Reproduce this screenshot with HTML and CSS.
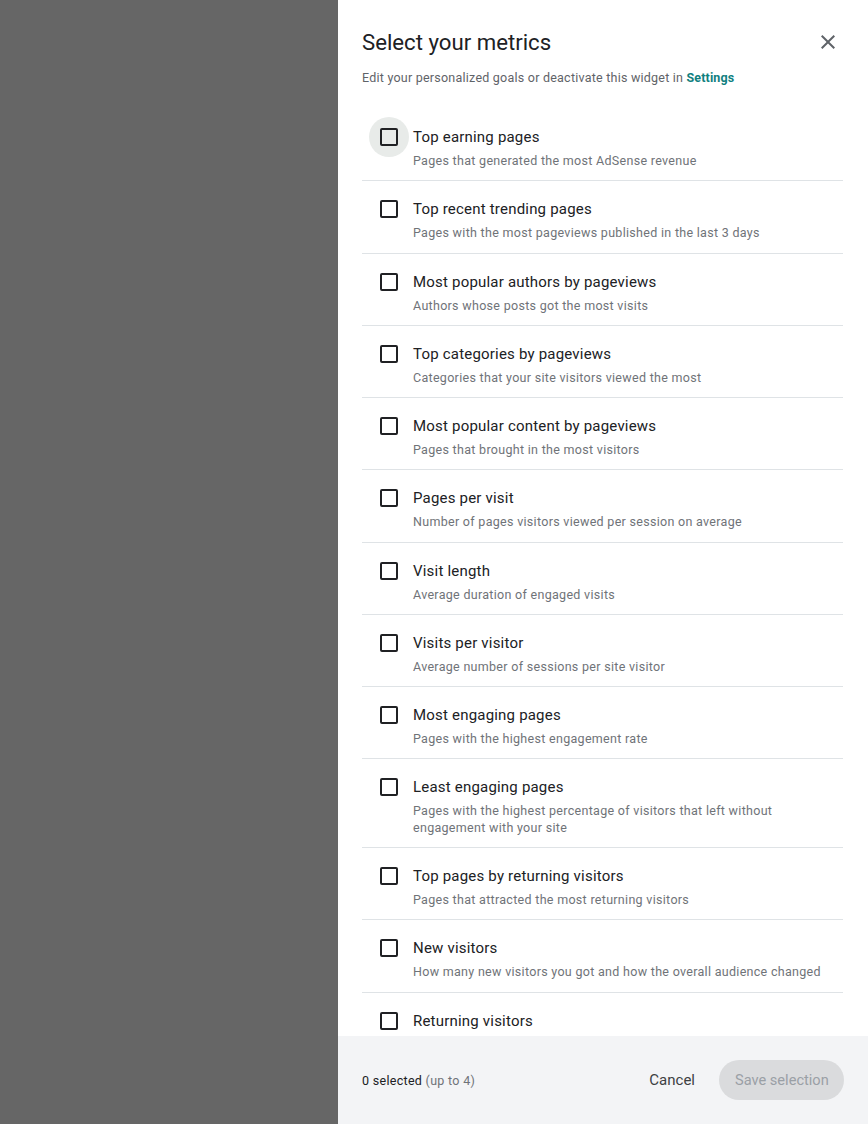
FILE: index.html
```html
<!DOCTYPE html>
<html>
<head>
<meta charset="utf-8">
<link rel="stylesheet" href="styles.css">
</head>
<body>
<div class="layout">
  <div class="overlay"></div>
  <aside class="panel">
    <div class="panel-scroll">
      <header class="head">
        <h1 class="title">Select your metrics</h1>
        <button class="close" aria-label="Close">
          <svg width="24" height="24" viewBox="0 0 24 24"><path d="M19 6.41 17.59 5 12 10.59 6.41 5 5 6.41 10.59 12 5 17.59 6.41 19 12 13.41 17.59 19 19 17.59 13.41 12z" fill="#5f6368"/></svg>
        </button>
      </header>
      <p class="sub">Edit your personalized goals or deactivate this widget in <a class="link">Settings</a></p>
      <ul class="list">
        <li class="item"><span class="cb hover"><span class="box"></span></span><div class="txt"><div class="name">Top earning pages</div><div class="desc">Pages that generated the most AdSense revenue</div></div></li>
        <li class="item"><span class="cb"><span class="box"></span></span><div class="txt"><div class="name">Top recent trending pages</div><div class="desc">Pages with the most pageviews published in the last 3 days</div></div></li>
        <li class="item"><span class="cb"><span class="box"></span></span><div class="txt"><div class="name">Most popular authors by pageviews</div><div class="desc">Authors whose posts got the most visits</div></div></li>
        <li class="item"><span class="cb"><span class="box"></span></span><div class="txt"><div class="name">Top categories by pageviews</div><div class="desc">Categories that your site visitors viewed the most</div></div></li>
        <li class="item"><span class="cb"><span class="box"></span></span><div class="txt"><div class="name">Most popular content by pageviews</div><div class="desc">Pages that brought in the most visitors</div></div></li>
        <li class="item"><span class="cb"><span class="box"></span></span><div class="txt"><div class="name">Pages per visit</div><div class="desc">Number of pages visitors viewed per session on average</div></div></li>
        <li class="item"><span class="cb"><span class="box"></span></span><div class="txt"><div class="name">Visit length</div><div class="desc">Average duration of engaged visits</div></div></li>
        <li class="item"><span class="cb"><span class="box"></span></span><div class="txt"><div class="name">Visits per visitor</div><div class="desc">Average number of sessions per site visitor</div></div></li>
        <li class="item"><span class="cb"><span class="box"></span></span><div class="txt"><div class="name">Most engaging pages</div><div class="desc">Pages with the highest engagement rate</div></div></li>
        <li class="item"><span class="cb"><span class="box"></span></span><div class="txt"><div class="name">Least engaging pages</div><div class="desc">Pages with the highest percentage of visitors that left without engagement with your site</div></div></li>
        <li class="item"><span class="cb"><span class="box"></span></span><div class="txt"><div class="name">Top pages by returning visitors</div><div class="desc">Pages that attracted the most returning visitors</div></div></li>
        <li class="item"><span class="cb"><span class="box"></span></span><div class="txt"><div class="name">New visitors</div><div class="desc">How many new visitors you got and how the overall audience changed</div></div></li>
        <li class="item"><span class="cb"><span class="box"></span></span><div class="txt"><div class="name">Returning visitors</div><div class="desc">How many returning visitors you got and how the overall audience changed</div></div></li>
      </ul>
    </div>
    <footer class="foot">
      <div class="count"><span class="num">0 selected</span> <span class="max">(up to 4)</span></div>
      <div class="actions">
        <button class="btn-text">Cancel</button>
        <button class="btn-save">Save selection</button>
      </div>
    </footer>
  </aside>
</div>
</body>
</html>
```

FILE: styles.css
```css
* { box-sizing: border-box; }
html, body { margin: 0; padding: 0; height: 100%; }
body { font-family: Roboto, "Noto Sans", sans-serif; color: #202124; overflow: hidden; }
.layout { display: flex; height: 1124px; }
.overlay { width: 338px; flex: none; background: #666666; }
.panel { flex: 1; display: flex; flex-direction: column; background: #fff; min-width: 0; }
.panel-scroll { flex: 1; overflow: hidden; padding: 0 25px 0 24px; }
.head { display: flex; align-items: center; justify-content: space-between; padding-top: 28px; height: 56px; }
.title { margin: 0; font-size: 22.2px; font-weight: 400; line-height: 28px; color: #202124; letter-spacing: 0; }
.close { border: 0; background: none; padding: 0; width: 24px; height: 24px; margin-right: 3px; cursor: pointer; display: flex; }
.sub { margin: 12px 0 0; font-size: 12.5px; line-height: 20px; color: #5f6368; letter-spacing: 0.23px; }
.link { color: #108080; font-weight: 700; letter-spacing: 0.1px; }
.list { list-style: none; margin: 21px 0 0; padding: 0; }
.item { display: flex; align-items: flex-start; padding: 16px 0 10.75px; border-bottom: 1px solid #dfe3e6; }
.cb { flex: none; width: 40px; height: 40px; margin: -8px 4px 0 7px; border-radius: 50%; display: flex; align-items: center; justify-content: center; }
.cb.hover { background: #e8ebe9; }
.box { width: 18px; height: 18px; border: 2px solid #202124; border-radius: 2px; }
.txt { flex: 1; min-width: 0; padding-right: 20px; }
.name { font-size: 15px; line-height: 24px; color: #202124; letter-spacing: 0.2px; }
.desc { margin-top: 4px; font-size: 12.5px; line-height: 16.5px; color: #6f7378; letter-spacing: 0.3px; }
.foot { flex: none; height: 88px; background: #f3f4f6; display: flex; align-items: center; justify-content: space-between; padding: 0 24px; position: relative; z-index: 1; }
.count { font-size: 12.5px; letter-spacing: 0.3px; }
.num { color: #202124; }
.max { color: #6f7378; }
.actions { display: flex; align-items: center; gap: 24px; }
.btn-text { border: 0; background: none; font-family: inherit; font-size: 15px; color: #3c4043; padding: 0; }
.btn-save { border: 0; background: #dadbdd; color: #9aa0a6; font-family: inherit; font-size: 14.6px; height: 40px; border-radius: 20px; padding: 0 16px; width: 125px; white-space: nowrap; }
```
